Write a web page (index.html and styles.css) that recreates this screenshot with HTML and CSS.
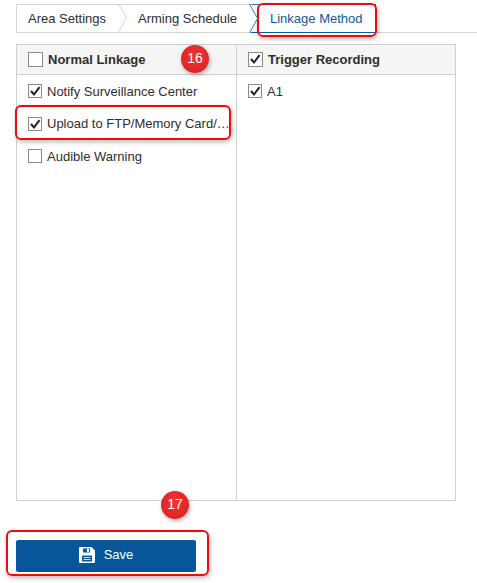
FILE: index.html
```html
<!DOCTYPE html>
<html lang="en">
<head>
<meta charset="utf-8">
<title>Linkage Method</title>
<link rel="stylesheet" href="styles.css">
</head>
<body>
<div class="page">
  <nav class="tabs">
    <div class="tab tab-first">Area Settings
      <svg class="chev" width="10" height="28" viewBox="0 0 10 28"><path d="M0.5 0 L8.5 14 L0.5 28" fill="#fff" stroke="#d4d4d4"/></svg>
    </div>
    <div class="tab tab-second">Arming Schedule
      <svg class="chev" width="10" height="29" viewBox="0 0 10 29"><path d="M0.5 0 L8.5 14.5 L0.5 29" fill="#fff" stroke="#2f7fc0"/></svg>
    </div>
    <div class="tab tab-active">Linkage Method</div>
  </nav>

  <div class="grid">
    <section class="col col-left">
      <header class="col-head"><span class="box box-lg"></span><span>Normal Linkage</span></header>
      <ul class="list">
        <li class="item"><span class="box checked"><svg viewBox="0 0 14 14"><path d="M3 7 L6 10.5 L11.5 3.2" fill="none" stroke="#222" stroke-width="2"/></svg></span>Notify Surveillance Center</li>
        <li class="item"><span class="box checked"><svg viewBox="0 0 14 14"><path d="M3 7 L6 10.5 L11.5 3.2" fill="none" stroke="#222" stroke-width="2"/></svg></span><span class="nowrap">Upload to FTP/Memory Card/…</span></li>
        <li class="item"><span class="box"></span>Audible Warning</li>
      </ul>
    </section>
    <section class="col">
      <header class="col-head"><span class="box box-lg checked"><svg viewBox="0 0 14 14"><path d="M3 7 L6 10.5 L11.5 3.2" fill="none" stroke="#222" stroke-width="2"/></svg></span><span>Trigger Recording</span></header>
      <ul class="list">
        <li class="item"><span class="box checked"><svg viewBox="0 0 14 14"><path d="M3 7 L6 10.5 L11.5 3.2" fill="none" stroke="#222" stroke-width="2"/></svg></span>A1</li>
      </ul>
    </section>
  </div>

  <button class="save" type="button">
    <svg width="16" height="16" viewBox="0 0 16 16"><path fill="#fff" fill-rule="evenodd" d="M1 0 H12.5 L16 3.5 V15 a1 1 0 0 1 -1 1 H1 a1 1 0 0 1 -1 -1 V1 a1 1 0 0 1 1 -1 Z M4 1.5 V5.5 H11 V1.5 Z M8 2 H10 V5 H8 Z M3 8.5 V14.5 H13 V8.5 Z"/><path fill="#fff" d="M4.5 10 H11.5 V11 H4.5 Z M4.5 12 H11.5 V13 H4.5 Z" opacity=".8"/></svg>
    <span class="save-label">Save</span>
  </button>

  <div class="mark mark-tab"></div>
  <div class="mark mark-item"></div>
  <div class="mark mark-save"></div>
  <div class="badge badge-16">16</div>
  <div class="badge badge-17">17</div>
</div>
</body>
</html>
```
FILE: styles.css
```css
* { box-sizing: border-box; }
html, body { margin: 0; padding: 0; background: #fff; }
.page {
  position: relative;
  width: 477px;
  height: 583px;
  overflow: hidden;
  padding: 4px 0 0 16px;
  font-family: "Liberation Sans", Arial, sans-serif;
  font-size: 13px;
  color: #2e2e2e;
}
.tabs {
  display: flex;
  height: 29px;
  border-bottom: 1px solid #d4d4d4;
}
.tab {
  position: relative;
  height: 28px;
  line-height: 27px;
  white-space: nowrap;
  border-top: 1px solid #d4d4d4;
}
.tab-first { width: 104px; padding-left: 11px; border-left: 1px solid #d4d4d4; }
.tab-second { width: 131px; padding-left: 18px; }
.tab-active {
  width: 125px;
  height: 29px;
  line-height: 27px;
  padding-left: 19px;
  color: #0a5a9c;
  border-top: 1px solid #2f7fc0;
  border-right: 1px solid #0a5a9c;
  border-bottom: 1px solid #0a5a9c;
}
.chev { position: absolute; right: -8px; top: -1px; z-index: 1; }
.grid {
  display: flex;
  width: 440px;
  height: 457px;
  margin-top: 11px;
  border: 1px solid #d0d0d0;
}
.col { flex: 1; min-width: 0; }
.col-left { flex: 0 0 220px; border-right: 1px solid #d0d0d0; }
.col-head {
  display: flex;
  align-items: center;
  gap: 5px;
  height: 30px;
  padding-left: 11px;
  background: #f5f5f5;
  border-bottom: 1px solid #d0d0d0;
  font-size: 13px;
  font-weight: bold;
  color: #2e2e2e;
}
.list { margin: 0; padding: 0; list-style: none; }
.item {
  display: flex;
  align-items: center;
  gap: 5px;
  height: 32.5px;
  padding-left: 11px;
}
.box {
  flex: none;
  display: block;
  width: 14px;
  height: 14px;
  background: #fff;
  border: 1px solid #8a8a8a;
}
.box-lg { width: 15px; height: 15px; }
.box svg { display: block; width: 14px; height: 14px; margin: -1px; }
.nowrap { white-space: nowrap; }
.save {
  display: flex;
  align-items: center;
  justify-content: center;
  gap: 9px;
  width: 180px;
  height: 32px;
  margin: 39px 0 0 0;
  padding: 0 0 2px 0;
  border: 0;
  border-radius: 2px;
  background: #07569b;
  color: #fff;
  font-family: inherit;
  font-size: 13px;
}
.save-label { margin-bottom: 2px; }
.mark {
  position: absolute;
  border: 2px solid #f00a0a;
  border-radius: 6px;
  box-shadow: 1px 2px 5px rgba(0,0,0,.28);
}
.mark-tab { left: 257px; top: 3px; width: 120px; height: 34px; }
.mark-item { left: 15px; top: 105px; width: 216px; height: 35px; }
.mark-save { left: 6px; top: 530px; width: 203px; height: 46px; }
.badge {
  position: absolute;
  width: 28px;
  height: 28px;
  line-height: 26px;
  border-radius: 50%;
  background: radial-gradient(circle at 50% 40%, #ee3535, #d81e1e);
  color: #fff;
  text-align: center;
  font-size: 14px;
  box-shadow: 1px 2px 4px rgba(0,0,0,.3);
}
.badge-16 { left: 181px; top: 45px; }
.badge-17 { left: 161px; top: 491px; }
```
